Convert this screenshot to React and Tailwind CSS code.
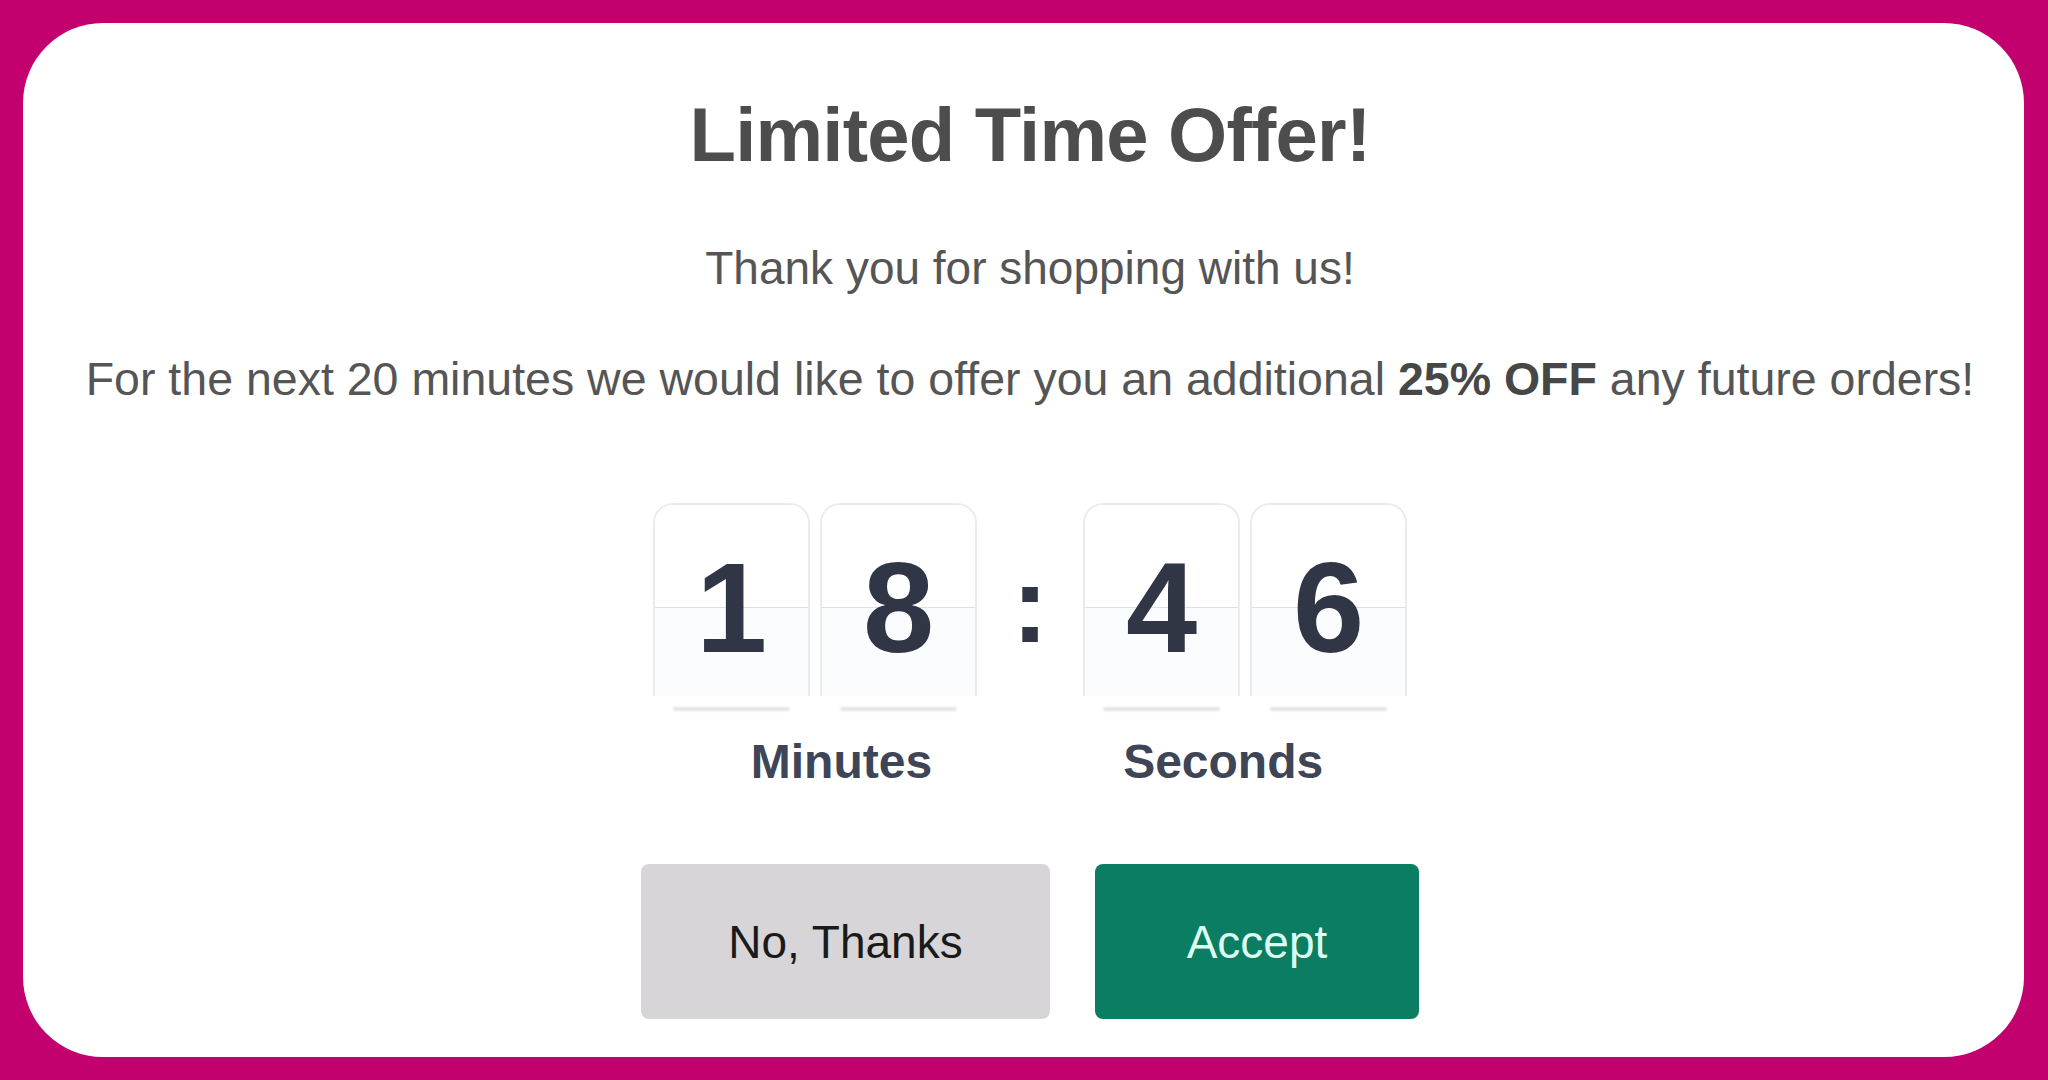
import React from "react";

function Card({ digit }) {
  return (
    <div className="flex flex-col w-[157px]">
      <div className="relative h-[193px] w-full rounded-t-[20px] border-x-2 border-t-2 border-[#ebebeb] bg-white overflow-hidden flex flex-col">
        <div className="h-[102px] bg-white"></div>
        <div className="h-px bg-[#e0e0e0]"></div>
        <div className="flex-1 bg-[#fbfcfd]"></div>
        <div className="absolute inset-x-0 top-0 h-[206px] flex items-center justify-center">
          <span className="text-[128px] leading-none font-bold text-[#303646]">{digit}</span>
        </div>
      </div>
      <div className="mt-[11px] mx-[20px] h-[4px] rounded-full bg-[#e4e4e4] blur-[1px]"></div>
    </div>
  );
}

export default function App() {
  return (
    <div
      className="w-full h-[1080px] bg-[#c2006e] pt-[23px] pl-[23px] pr-[24px] pb-[23px]"
      style={{ fontFamily: '"Liberation Sans", Arial, sans-serif' }}
    >
      <div className="h-full w-full bg-white rounded-[80px] flex flex-col items-center pt-[74px] pl-[13px]">
        <h1 className="text-[76px] leading-none font-bold text-[#4d4d4d] tracking-[-0.01em]">
          Limited Time Offer!
        </h1>
        <p className="mt-[72px] text-[46px] leading-none text-[#555555]">
          Thank you for shopping with us!
        </p>
        <p className="mt-[65px] text-[46.5px] leading-none text-[#555555] whitespace-nowrap">
          For the next 20 minutes we would like to offer you an additional{" "}
          <span className="font-bold text-[#474747]">25% OFF</span> any future orders!
        </p>

        <div className="mt-[100px] flex items-start">
          <div className="flex gap-[10px]">
            <Card digit="1" />
            <Card digit="8" />
          </div>
          <div className="w-[106px] flex justify-center mt-[46px]">
            <span className="text-[110px] leading-none font-bold text-[#303646]">:</span>
          </div>
          <div className="flex gap-[10px]">
            <Card digit="4" />
            <Card digit="6" />
          </div>
        </div>

        <div className="mt-[27px] flex gap-[191px] pl-[14px]">
          <span className="text-[48px] leading-none font-bold text-[#3e4556]">Minutes</span>
          <span className="text-[48px] leading-none font-bold text-[#3e4556]">Seconds</span>
        </div>

        <div className="mt-[78px] flex gap-[45px]">
          <button className="w-[409px] h-[155px] rounded-[8px] bg-[#d7d5d8] text-[46px] text-[#1a1a1a] flex items-center justify-center pt-[3px]">
            No, Thanks
          </button>
          <button className="w-[324px] h-[155px] rounded-[8px] bg-[#0a7d62] text-[46px] text-[#dcfdf0] flex items-center justify-center pt-[3px]">
            Accept
          </button>
        </div>
      </div>
    </div>
  );
}
